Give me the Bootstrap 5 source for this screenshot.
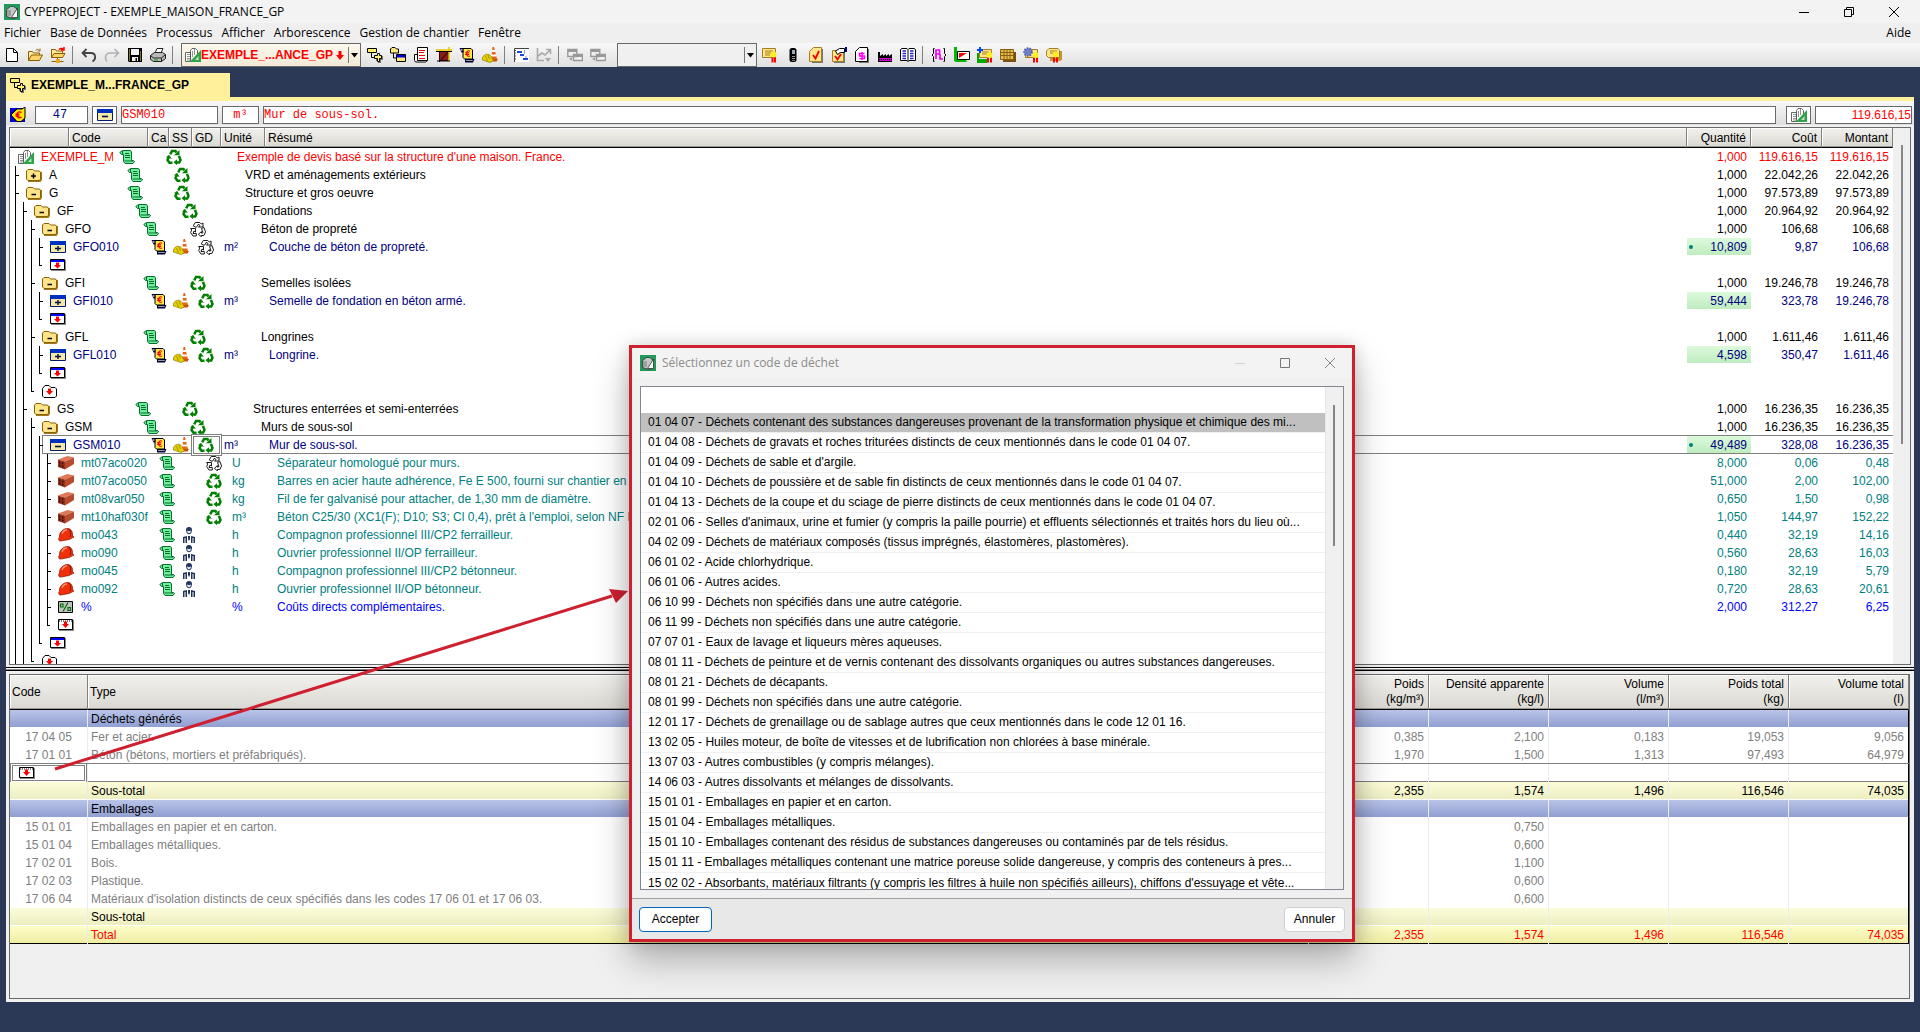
<!DOCTYPE html>
<html lang="fr">
<head>
<meta charset="utf-8">
<meta name="viewport" content="width=device-width, initial-scale=1">
<title>CYPEPROJECT - EXEMPLE_MAISON_FRANCE_GP</title>
<link href="https://cdn.jsdelivr.net/npm/bootstrap@5.3.0/dist/css/bootstrap.min.css" rel="stylesheet">
<style>
:root{--navy:#2b3956;--tab:#fff09c;--line:#696969;--ui:"Open Sans","Noto Sans",sans-serif;--grid:"Liberation Sans",Arial,sans-serif}
body{height:100vh;overflow:hidden;background:var(--navy);font:12px/18px var(--grid);color:#000}
svg{display:block;flex:none}
.ic{width:16px;height:16px}
button{font:inherit;color:inherit;background:none;border:0;padding:0}
.title-strip{height:23px;background:#f3f3f3;font-family:var(--ui)}
.win-btn{width:45px;height:18px}
.menu-strip{height:20px;background:#efefef;font-family:var(--ui);padding:0 9px 0 4px}
.menu-strip a{color:#000;text-decoration:none;margin-right:9px}
.menu-strip a:last-child{margin:0 0 0 auto}
.tool-strip{height:24px;background:linear-gradient(#f8f8f8,#e0e0e0)}
.tool{width:23px;height:24px}
.tool-sep{width:8px;height:18px;border-left:1px solid #808080;margin-left:3px;margin-right:-3px}
.doc-pick{width:180px;height:24px;margin:0 2px 0 4px;border:1px solid var(--line);background:linear-gradient(#fdf8ee,#f1e9d6);color:#f00;font-weight:700;padding-left:3px}
.pick-arrow{width:12px;height:16px;border-left:1px solid #777;flex:none;padding-left:2px}
.view-pick{width:140px;height:24px;margin:0 1px 0 8px;border:1px solid var(--line);background:#f0f0f0}
.view-pick select{appearance:none;border:0;background:none;min-width:0}
.tab-strip{height:30px;padding:6px 0 0 6px}
.doc-tab{width:224px;background:var(--tab);font-weight:700;padding-left:4px;gap:5px}
.work-pane{margin:0 6px 30px;border-top:4px solid var(--tab);background:#f0f0f0;min-height:0}
.edit-strip{background:linear-gradient(#f8f8f8,#dedede);padding:5px 2px 1px 4px;margin-bottom:2px;gap:4px}
.edit-strip input,.mini-btn{height:18px;border:1px solid var(--line);border-radius:0;background:#fff;padding:0;font:12px/16px "Liberation Mono",monospace;color:#f00}
.mini-btn{width:25px}
.edit-strip .f-pos{width:53px;margin-left:5px;color:#000080;padding-right:3px}
.edit-strip .f-code{width:97px}
.edit-strip .f-unit{width:37px}
.edit-strip .b-total{margin-left:6px}
.edit-strip .f-total{width:97px;font-family:var(--grid)}
.sheet{border:1px solid var(--line);margin:0 3px}
.sheet table{table-layout:fixed;width:100%;border-collapse:separate;border-spacing:0}
.sheet th{font-weight:400;background:linear-gradient(#f2f1ee,#dad8d1);border-right:1px solid #808080;border-bottom:1px solid #000;box-shadow:inset 0 -1px #999,inset 1px 1px #fff;padding:0 4px 0 2px;white-space:nowrap;overflow:hidden}
.sheet td{height:18px;line-height:18px;padding:0;white-space:nowrap;overflow:hidden}
.sheet .num{text-align:right;padding-right:4px}
.tree-table th{height:20px;line-height:18px;padding-top:1px;padding-left:3px}
.tree-row{height:18px;padding-left:5px}
.guide{width:8px;height:18px;border-left:1px solid #000;position:relative}
.guide.tick::after{content:"";position:absolute;left:0;top:9px;width:3px;height:1px;background:#000}
.guide.end{border-left:0}
.guide.end::before{content:"";position:absolute;left:0;top:0;width:1px;height:10px;background:#000}
.node-ic{margin-right:7px;width:16px}
.code-txt{width:72px;overflow:hidden;margin-right:6px}
.slot-ca{width:22px}.slot-ss{width:25px}.slot-gd{width:26px}.slot-un{width:45px}
.k-root{color:#f00}.k-chap{color:#000}.k-item{color:#000080}.k-res{color:#008080}.k-pct{color:#00f}
.measured{background:linear-gradient(#dcfadc,#bfecbf) no-repeat;background-size:100% 17px;position:relative}
.measured.dotted::before{content:"";position:absolute;left:2px;top:7px;width:4px;height:4px;border-radius:2px;background:#008080}
.tree-rest{height:18px;padding-left:3px}
.sheet .picked td{overflow:visible}
.picked .tree-rest,.picked .num{box-shadow:0 -1px #808080,inset 0 -1px #808080}
.picked .tree-rest{border-left:1px solid #808080;margin-left:-5px;padding-left:7px}
.cell-focus{width:31px;height:22px;margin:-2px 0 -2px -7px;padding-left:4px;border:3px double #808080;background:#fff}
.rail{width:17px;background:#f0f0f0;padding:17px 0 0 8px}
.rail i{display:block;width:2px;height:299px;background:#868686}
.splitter{height:4px;margin:2px 0 3px;border-top:1px solid #000;border-bottom:1px solid #000;box-shadow:inset 0 -1px #808080;background:#fff}
.waste-sheet{margin-right:4px;margin-bottom:3px;padding-bottom:54px}
.waste-table th{height:35px;line-height:15px}
.waste-table td{background:#fff;border-right:1px solid #ececf0;color:#808080;padding-left:3px}
.waste-table td:last-child{border-right-color:#000}
.waste-table .code-cell{text-align:center;padding:0}
.waste-table .sect td{background:#fff linear-gradient(#bac4e8,#909fd2) no-repeat;background-size:100% 17px;color:#000}
.waste-table .sub td{background:#fff linear-gradient(#fcfcda,#eeeec2) no-repeat;background-size:100% 17px;color:#000}
.waste-table .tot td{background:#000 linear-gradient(#fdfdc8,#f0eea4) no-repeat;background-size:100% 17px;color:#f00}
.waste-table .entry td{overflow:visible;box-shadow:0 -1px #808080,inset 0 -1px #808080}
.entry-box{height:20px;margin:-1px 0;border:3px double #808080;background:#fff;padding-left:6px}
.picker{position:absolute;left:629px;top:345px;width:726px;height:597px;border:3px solid #cf2030;background:#f0f0f0;box-shadow:0 18px 34px rgba(0,0,0,.28),0 0 16px rgba(0,0,0,.14)}
.picker-head{height:30px;background:#f3f3f3;font-family:var(--ui);color:#8c8c8c;padding-left:8px}
.picker-head .ic{margin-right:6px}
.picker-list{margin:8px;border:1px solid #828790;background:#fff;min-height:0}
.picker-list input{height:26px;border:0;outline:0;padding:0 7px}
.picker-list .list-group-item{height:20px;line-height:18px;padding:0 0 1px 7px;border:0;border-bottom:1px solid #f0f0f0;white-space:nowrap;overflow:hidden;color:#000;flex:none}
.picker-list .list-group-item.active{background:#c0c0c0;color:#000;margin:0}
.picker-rail{width:18px;border-left:1px solid #e6e6e6;background:#f0f0f0;padding:18px 0 0 7px}
.picker-rail i{display:block;width:2px;height:141px;background:#868686}
.picker-foot{height:41px;background:#e8e8e8;border-top:1px solid #a0a0a0;padding:0 7px}
.dlg-btn{height:25px;border:1px solid #d0d0d0;border-radius:4px;background:#fdfdfd;width:61px}
.dlg-btn.main{border-color:#0067c0;width:73px}
.pointer-line{position:absolute;left:0;top:0;width:640px;height:800px;pointer-events:none}
</style>
</head>
<body class="d-flex flex-column">

<svg width="0" height="0" class="position-absolute" aria-hidden="true">
<symbol id="i-app" viewBox="0 0 16 16"><path fill="#1f9a5a" d="M0 0h16v16H0z"/><path fill="#c4c8c4" stroke="#333" stroke-width=".8" d="M2.500 5.500 6.500 2.500h3l3 2v9l-4 1-6-2z"/><path stroke="#666" stroke-width=".8" d="M4 6v6M6 6v6"/><path fill="#fff" stroke="#333" stroke-width=".8" d="M13.500 4v9.500h-6z"/></symbol>
<symbol id="i-bldg" viewBox="0 0 16 16"><path fill="#fff" stroke="#555" stroke-width=".9" d="M.5 5.500h5v9h-5zM5.500 12V3.500L7 1.500h3.500l2 2V7"/><path stroke="#777" stroke-width=".8" d="M2 7.500h3M2 9.500h3M2 11.500h3M2 13h3M7.500 4v6M9.500 2v6"/><path fill="#2fa24a" d="M16 3v12H4.500z"/><path fill="#b8e8c0" d="M13.500 9v4h-3.500z"/></symbol>
<symbol id="i-new" viewBox="0 0 16 16"><path fill="#fff" stroke="#000" d="M2.500 1.500h7l4 4v9h-11z"/><path fill="none" stroke="#000" d="M9.500 1.500v4h4"/></symbol>
<symbol id="i-open" viewBox="0 0 16 16"><path fill="#ffe9a0" stroke="#8a6000" d="M1.500 13.500v-9h4l1 1.500h6v2"/><path fill="#ffd468" stroke="#8a6000" d="M1.500 13.500 4.500 8h11l-3 5.500z"/><path fill="none" stroke="#a07020" d="M8.500 3.500c2-2 4-1 4.500.5m0-2.500v2.500h-2.500"/></symbol>
<symbol id="i-opennet" viewBox="0 0 16 16"><path fill="#ffe9a0" stroke="#8a6000" d="M1.500 10.500v-8h4l1 1.500h6v2"/><path fill="#ffd468" stroke="#8a6000" d="M1.500 10.500 4 6.500h11l-2.500 4zM7.500 11v2m-6 1.500h12"/><path fill="#e8a820" d="M6 12h4v4H6z"/><path fill="none" stroke="#f00" stroke-width="1.500" d="M9 2.500c2-2 4-1 5 .5m0-3v3h-3"/></symbol>
<symbol id="i-undo" viewBox="0 0 16 16"><path fill="none" stroke="#444" stroke-width="1.800" d="M5.500 2 1.500 6l4 4M2 6h8c5 0 5.500 6 1.500 8.500"/></symbol>
<symbol id="i-redo" viewBox="0 0 16 16"><path fill="none" stroke="#b0b0b0" stroke-width="1.600" d="m10.500 2 4 4-4 4M14 6H6C1 6 .5 12 3 14.500"/></symbol>
<symbol id="i-save" viewBox="0 0 16 16"><path d="M1 1h14v14H2l-1-1z"/><path fill="#f0f0f0" d="M4 2h8v6H4zM5 10h6v4H5z"/><path fill="#808000" d="M2 2h1v12H2zM13 4h1v10h-1z"/><path d="M8.500 11H10v3H8.500z"/></symbol>
<symbol id="i-print" viewBox="0 0 16 16"><path fill="#fff" stroke="#222" d="M5 6 7 1.500h6L11 6"/><path fill="#b8b8b8" stroke="#222" d="m.5 8.500 4-3h8l3 2v4l-4 3h-8l-3-2z"/><path stroke="#222" fill="none" d="m.5 8.500 3 2.500h8l4-3.500M11.500 11v3.500"/><path stroke="#0a0" d="M4 13h4"/></symbol>
<symbol id="i-branch" viewBox="0 0 16 16"><path fill="#777" d="M9 9h7v4h-2v3h-3v-2H9z"/><path fill="#fff06a" stroke="#000" d="M.5 1.500h9v4h-9z"/><path fill="none" stroke="#000" d="M4.500 5.500v5h4"/><path fill="#fff36b" stroke="#000" d="M10.500 6.500h2v2h2v3h-2v3h-2v-3h-3v-3h3z"/></symbol>
<symbol id="i-folders" viewBox="0 0 16 16"><path fill="#ffe97a" stroke="#000" d="M.5 2 2 .5h3L6.500 2h2v4h-8z"/><path fill="none" stroke="#000" d="M3.500 6v5h3"/><path fill="#ffe97a" stroke="#000" d="M6.500 7.500h9v7h-9z"/><path fill="#00d" d="M7 8h8v2.500H7z"/></symbol>
<symbol id="i-docred" viewBox="0 0 16 16"><path fill="#fff" stroke="#000" d="M4.500.5h10v13h-10z"/><path fill="#fff" stroke="#000" d="M4.500 7.500h-3v6l1 1.500h10l2-1.500h-10z"/><path stroke="#e00" d="M6 3.500h6M6 5.500h5M6 8.500h6M6 11.500h6"/></symbol>
<symbol id="i-cross" viewBox="0 0 16 16"><path fill="#8b1a1a" stroke="#400" d="M3.500 4.500h9v9h-9z"/><path stroke="#e8c800" stroke-width="1.500" d="M0 3h16M13 0v14"/><path stroke="#000" d="M0 4.500h16M3 15 12 5M1 14h13"/></symbol>
<symbol id="i-euro" viewBox="0 0 16 16"><path fill="#ffe84a" stroke="#000" d="M4 1.500h8l1.500 1.500v9H5.500L4 10.500z"/><path fill="#003" d="M.5 1h4v4.500h-2zM6 12h9.500L14 15.500H6z"/><path fill="#99a" d="M7 13h7l-.5 1H7zM1.500 2h2v2h-2z"/><path fill="none" stroke="#e00" stroke-width="1.100" d="M11 4.300C9 3 7.400 4.600 7.400 6.500S9 10 11 8.900M6.200 5.800h4M6.200 7.400h4"/></symbol>
<symbol id="i-cone" viewBox="0 0 16 16"><path fill="#e8641a" d="M10.500 0h1.500l3 12H9z"/><path fill="#fff" d="M9.900 3h2.900l.5 2H9.500zM9 7.500h5l.5 2H9z"/><path fill="#d05000" d="M8 12h8l-1.500 2.500H8z"/><path fill="#e6d000" stroke="#8a7a00" stroke-width=".7" d="M.5 13C-.5 7 8 4.500 10 11.500l1.500 2-3.500 2z"/><path stroke="#8a7a00" stroke-width=".7" d="M3.500 9l2 5M6 8l1.500 4"/></symbol>
<symbol id="i-gantt" viewBox="0 0 16 16"><path fill="#fff" d="M1 1h15v14H1z"/><path stroke="#444" fill="none" d="M1.500 15V1.500H16M1 3.500h2M1 6h2M1 9h2M1 12h2"/><path fill="#1a49d8" d="M4 4h5v2H4zM7 7h4v2H7zM10 11h5v2h-5z"/><path stroke="#99a" d="M11.500 3v4M13 9v2"/></symbol>
<symbol id="i-chart" viewBox="0 0 16 16"><path fill="none" stroke="#aaa" stroke-width="1.600" d="M1.500 1v12.500H8M2 9l4-3 3 2 5-5M10 2.500h4.500V7"/><path fill="#aaa" d="M9 11h6l-3 4z"/></symbol>
<symbol id="i-dup" viewBox="0 0 16 16"><path fill="#f0f0f0" stroke="#999" stroke-width="1.400" d="M.8 2.500h9v7h-9zM6.500 7.500h9v6h-9z"/><path fill="#999" d="M1 2h9v3H1zM6 7h10v3H6zM2 12l3-1.500v3z"/></symbol>
<symbol id="i-cert" viewBox="0 0 16 16"><path fill="#ffe68a" stroke="#a87c20" d="M.5 1.500h13v9H.5z"/><path stroke="#a87c20" d="M3 4h8M3 6h6M3 8h5"/><circle cx="11.500" cy="7.500" r="3" fill="#ffee20"/><path fill="#f00" d="M9.500 10.500h2V16l-1-1-1 1zM12 10.500h2V16l-1-1-1 1z"/></symbol>
<symbol id="i-certplus" viewBox="0 0 16 16"><path fill="#0a0" d="M0 6h2v6h8v4H0z"/><path fill="#ffe68a" stroke="#a87c20" d="M2.500 2.500h12v8h-12z"/><path stroke="#a87c20" d="M5 5h7M5 7h5"/><circle cx="12.500" cy="8" r="3" fill="#ffee20"/><path fill="#f00" d="M10 11h2v5l-1-1-1 1zM13 11h2v5l-1-1-1 1z"/><path stroke="#04f" stroke-width="2" d="M0 3h6M3 0v6"/></symbol>
<symbol id="i-certgear" viewBox="0 0 16 16"><path fill="#ffe68a" stroke="#a87c20" d="M2.500 2.500h12v8h-12z"/><circle cx="12.500" cy="8" r="3" fill="#ffee20"/><path fill="#f00" d="M10 11h2v5l-1-1-1 1zM13 11h2v5l-1-1-1 1z"/><circle cx="5" cy="5" r="3.800" fill="#7080c8" stroke="#5060b0" stroke-width="2" stroke-dasharray="1.500 1.200"/></symbol>
<symbol id="i-certs" viewBox="0 0 16 16"><path fill="#c89830" d="M4 4h12v9l-2 1H4z"/><path fill="#ffe68a" stroke="#a87c20" d="M.5 4 3 1.500h9l1.500 2v7h-11l-2-2z"/><path stroke="#a87c20" d="M4 4h7M4 6h5"/><circle cx="9.500" cy="7.500" r="3" fill="#ffee20"/><path fill="#f00" d="M7 10.500h2V16l-1-1-1 1zM10 10.500h2V16l-1-1-1 1z"/></symbol>
<symbol id="i-phone" viewBox="0 0 16 16"><rect x="4.500" y="1" width="7" height="14" rx="2.500"/><path fill="#9ab" d="M7 3h3v4H7z"/><path fill="#999" d="M7 9h3v1H7zM7 11h3v1H7zM7 13h3v.8H7z"/></symbol>
<symbol id="i-note" viewBox="0 0 16 16"><path fill="#777" d="M4 2h11v14H4z"/><path fill="#ffe68a" stroke="#a87c20" d="M5.500.5h8v14h-12v-10z"/><path fill="none" stroke="#e00" stroke-width="1.800" d="m5 8 2.500 3.500L11 4"/></symbol>
<symbol id="i-notehand" viewBox="0 0 16 16"><path fill="#777" d="M3 5h11v11H3z"/><path fill="#ffe68a" stroke="#a87c20" d="M1.500 3.500h11v11h-11z"/><path fill="none" stroke="#e00" stroke-width="1.800" d="m4 9 2.500 3.500L10 7"/><path fill="#fff" stroke="#000" d="m4.500 4 4-2.500h5v4h-4l-3 2z"/><path fill="#008" d="M14 0h2v5h-2z"/></symbol>
<symbol id="i-dollar" viewBox="0 0 16 16"><path fill="#777" d="M5 2h10v14H5z"/><path fill="#fff" stroke="#000" d="M5.500.5h8v14h-12v-10z"/><path fill="none" stroke="#f0f" stroke-width="1.500" d="M10.500 6.500h-5V9h5v2.500h-5M8 5v8"/></symbol>
<symbol id="i-factory" viewBox="0 0 16 16"><path d="M1 5h2v4l3-2v2l3-2v2l3-2v2l3-2v8H1z"/><path fill="#c0c" d="M2 11h13v3H2z"/><path stroke="#000" stroke-dasharray="1 1" d="M2 12.500h13"/></symbol>
<symbol id="i-book" viewBox="0 0 16 16"><path fill="#fff" stroke="#000" d="M.5 2.500 2 1.500h5l1 1 1-1h5l1.500 1v11H9l-1 1-1-1H.5zM8 2.500v12"/><path stroke="#22c" stroke-width="1.300" d="M2.500 4H6M2.500 6.500H6M2.500 9H6M2.500 11.500H6M10 4h3.500M10 6.500h3.500M10 9h3.500M10 11.500h3.500"/></symbol>
<symbol id="i-curly" viewBox="0 0 16 16"><path fill="none" stroke="#000" d="M3.500 1.500h-1v5l-1.500 1.500 1.500 1.500v5h1M12.500 1.500h1v5l1.500 1.500-1.500 1.500v5h-1"/><path fill="none" stroke="#e0e" stroke-width="1.700" d="M5 12V3h3.500v4H5M9 7v5h3"/></symbol>
<symbol id="i-dev" viewBox="0 0 16 16"><path fill="#0b0" d="M0 0h3v11h8l2 4H2l-2-1z"/><path fill="#fff" stroke="#000" d="M3.500 4.500h12v8h-12z"/><path fill="#f00" d="M5 6h8l-8 5z"/></symbol>
<symbol id="i-gridy" viewBox="0 0 16 16"><path fill="#7a5010" d="M3 5h13v10H3z"/><path fill="#e8c050" stroke="#8a6010" d="M.5 2.500h13v10H.5z"/><path stroke="#8a6010" d="M4 3v9M7 3v9M10 3v9M1 5.500h12M1 8.500h12"/></symbol>
<symbol id="i-scroll" viewBox="0 0 16 16"><path fill="#6cf09a" stroke="#0a6a30" d="M3.500 1.500h8l1 1.500v8.500h2l1 1-1.500 2h-8l-1.500-2V5.500h-2L.8 3.500z"/><path stroke="#0a6a30" d="M6 4.500h4M6 6.500h5M6 8.500h5M5.500 12h9M3.500 2v3"/></symbol>
<symbol id="i-rec" viewBox="0 0 16 16"><path fill="none" stroke="#008000" stroke-width="2.500" d="M4.200 5.300 6 2h3.500l1 1.500M2.500 8.500l-1 2.500 2 2.800h3M13 6.800l1.500 4.200-1.300 2.500H10.500"/><path fill="#008000" d="M8 6.200h5.500V1zM0 8.200l3-2.400 2.800 4.200zM11 10.300V16.200L7.500 13.300z"/></symbol>
<symbol id="i-reco" viewBox="0 0 16 16"><path fill="#fff" stroke="#000" stroke-width=".9" d="M3.200 4.800 5.300 1.500H9.800L11.300 3l1.700-1V6H8.500L10 4.800 8.600 3 6.200 6.500zM.6 7.500H5.500v3.500L4 10l-1 2.500H6.300v2.500H3L.6 11.500 1.800 9zM11.500 7.500l2.500-1 1.500 4.500-1.600 3.500h-2.500v1.300l-3-2.500 3-2.700v1.500l1.600-.4z"/></symbol>
<symbol id="i-fplus" viewBox="0 0 16 16"><path fill="#a07818" d="M1 5h15v8l-1.500 2H2z"/><path fill="#ffe48a" stroke="#8a6000" d="M.5 4 2 2.500h5L8.500 4h5l1 1.500v7L13 13.500H2L.5 12z"/><path stroke="#000" stroke-width="1.500" d="M5 9h5M7.500 6.500v5"/></symbol>
<symbol id="i-fminus" viewBox="0 0 16 16"><path fill="#a07818" d="M1 5h15v8l-1.500 2H2z"/><path fill="#ffe48a" stroke="#8a6000" d="M.5 4 2 2.500h5L8.500 4h5l1 1.500v7L13 13.500H2L.5 12z"/><path stroke="#000" stroke-width="1.500" d="M5.500 9.500h4.500"/></symbol>
<symbol id="i-bplus" viewBox="0 0 16 16"><path fill="#f6e9a8" stroke="#001a70" d="M.5 2.500h15v11H.5z"/><path fill="#0030c0" d="M0 2h16v4H0z"/><path stroke="#001040" stroke-width="1.400" d="M5 9.500h6M8 7v5"/></symbol>
<symbol id="i-bminus" viewBox="0 0 16 16"><path fill="#f6e9a8" stroke="#001a70" d="M.5 2.500h15v11H.5z"/><path fill="#0030c0" d="M0 2h16v4H0z"/><path stroke="#001040" stroke-width="1.600" d="M5 9.500h6"/></symbol>
<symbol id="i-bins" viewBox="0 0 16 16"><path fill="#888" d="M1 3h15v11H1z"/><path fill="#fff" stroke="#000" d="M.5 2.500h14v10H.5z"/><path fill="#00f" d="M1 3h13v2H1z"/><path fill="#f00" d="M6 5.500h3V8h2L7.500 11.500 4 8h2z"/></symbol>
<symbol id="i-kins" viewBox="0 0 16 16"><path fill="#888" d="M1 3h15v11H1z"/><path fill="#fff" stroke="#000" d="M.5 2.500h14v10H.5z"/><path stroke="#000" d="M1 4h13" stroke-dasharray="1 1"/><path fill="#f00" d="M6 4.500h3V7h2l-3.500 4L4 7h2z"/></symbol>
<symbol id="i-fins" viewBox="0 0 16 16"><path fill="#fff" stroke="#000" d="M.5 5.500 3 2.500h4l2 2h4l1.500 1.500v7L13 14.500H2L.5 13z"/><path fill="#f00" d="M6 5.500h3V8h2L7.500 12 4 8h2z"/></symbol>
<symbol id="i-brick" viewBox="0 0 16 16"><path fill="#e07858" d="m0 4.500 9.500-3.500L16 2.500 7 6.500z"/><path fill="#b84a30" d="m7 6.500 9-4V9l-9 5.500z"/><path fill="#983420" d="m0 4.500 7 2v8L0 12z"/><path fill="#401008" d="M1 6.500h1.500v2H1zM3.800 7.500h1.700v2H3.800zM1 9.500h1.500v2H1zM3.800 10.500h1.700v2H3.800z"/></symbol>
<symbol id="i-helmet" viewBox="0 0 16 16"><path fill="#f0300a" stroke="#8a1000" stroke-width=".7" d="M1.500 10C1 5 6 1 10 1.500c3.500.5 5 4 4.500 7.500L16 10l-5 2.500-8 1.500c-2.500.3-3-2-1.500-4z"/><path stroke="#ff9070" fill="none" stroke-width="1.300" d="M4 7c1-3 3-4 5-4"/><path stroke="#8a1000" fill="none" d="M11 2c2 2 2 5 1 8"/></symbol>
<symbol id="i-worker" viewBox="0 0 16 16"><path fill="#20335c" d="M5 3a3 3 0 0 1 6 0v1H5zM2 10l4-1v7H2zM10 9l4 1v6h-4z"/><circle cx="8" cy="4.500" r="2.300" fill="#dde4f0" stroke="#20335c"/><path fill="#20335c" d="M7 9h2v3l-1 2-1-2zM7 2h2v2H7z"/><path stroke="#fff" d="M4 11v5M12 11v5"/></symbol>
<symbol id="i-pct" viewBox="0 0 16 16"><path fill="#c0c0c0" stroke="#000" d="M.5 2.500h14v11H.5z"/><path fill="none" stroke="#007000" stroke-width="1.200" d="m10 3.500-5 9M2.500 5h2.500v3H2.500zM10 8.500h2.500v3H10z"/></symbol>
<symbol id="i-tag" viewBox="0 0 16 16"><path fill="#00c" d="M0 1h15v14H0z"/><path fill="#ffe800" stroke="#000" d="M1 8 7 2h5l3-2v11l-4 3.500H7z"/><path fill="none" stroke="#e00" stroke-width="1.400" d="M11.500 5.500c-3-1.500-4.500 0-4.500 2.500s2 3.500 4.500 2.200M5.500 7.300h4M5.500 9h4"/></symbol>
</svg>

<header class="title-strip d-flex align-items-center flex-shrink-0 ps-1">
  <svg class="ic"><use href="#i-app"/></svg>
  <span class="ms-1 me-auto">CYPEPROJECT - EXEMPLE_MAISON_FRANCE_GP</span>
  <button class="win-btn" aria-label="Réduire"><svg class="m-auto" width="12" height="12"><path stroke="#000" d="M1 6.500h10"/></svg></button>
  <button class="win-btn" aria-label="Restaurer"><svg class="m-auto" width="12" height="12"><path fill="none" stroke="#000" d="M1.500 3.500h7v7h-7zM3.500 3V1.500h7v7H9"/></svg></button>
  <button class="win-btn me-1" aria-label="Fermer"><svg class="m-auto" width="12" height="12"><path stroke="#000" d="m1 1 10 10M11 1 1 11"/></svg></button>
</header>

<nav class="menu-strip d-flex align-items-center flex-shrink-0">
  <a href="#">Fichier</a><a href="#">Base de Données</a><a href="#">Processus</a><a href="#">Afficher</a><a href="#">Arborescence</a><a href="#">Gestion de chantier</a><a href="#">Fenêtre</a><a href="#">Aide</a>
</nav>

<div class="tool-strip d-flex align-items-center flex-shrink-0" role="toolbar">
  <div class="d-flex" data-tools="new:Nouveau,open:Ouvrir,opennet:Gestion des fichiers"></div>
  <span class="tool-sep"></span>
  <div class="d-flex" data-tools="undo:Défaire,redo:Refaire,save:Enregistrer,print:Imprimer"></div>
  <span class="tool-sep"></span>
  <button class="doc-pick d-flex align-items-center">
    <svg class="ic"><use href="#i-bldg"/></svg><span class="me-auto">EXEMPLE_...ANCE_GP</span>
    <svg class="me-1" width="8" height="9"><path fill="#f00" d="M2.500 0h3v4H8L4 9 0 4h2.500z"/></svg>
    <span class="pick-arrow d-flex align-items-center"><svg width="7" height="5"><path d="M0 0h7L3.500 4.500z"/></svg></span>
  </button>
  <div class="d-flex" data-tools="branch:Arborescence,folders:Chapitres,docred:Documents,cross:Métrés,euro:Budget,cone:Sécurité"></div>
  <span class="tool-sep"></span>
  <div class="d-flex" data-tools="gantt:Diagramme,chart:Courbe"></div>
  <span class="tool-sep"></span>
  <div class="d-flex" data-tools="dup:Copier,dup:Coller"></div>
  <div class="view-pick d-flex align-items-center">
    <select class="flex-grow-1" aria-label="Vue"><option></option></select>
    <span class="pick-arrow d-flex align-items-center"><svg width="7" height="5"><path d="M0 0h7L3.500 4.500z"/></svg></span>
  </div>
  <div class="d-flex" data-tools="cert:Certification,phone:Appel,note:Vérifier,notehand:Réviser,dollar:Prix,factory:Fournisseurs,book:Cahier"></div>
  <span class="tool-sep"></span>
  <div class="d-flex" data-tools="curly:Variables,dev:Devis,certplus:Ajouter,gridy:Tableau,certgear:Options,certs:Certifications"></div>
</div>

<div class="tab-strip d-flex flex-shrink-0">
  <a href="#" class="doc-tab d-flex align-items-center text-decoration-none text-black"><svg class="ic"><use href="#i-branch"/></svg>EXEMPLE_M...FRANCE_GP</a>
</div>

<main class="work-pane d-flex flex-column flex-grow-1">
  <div class="edit-strip d-flex align-items-center flex-shrink-0">
    <svg class="ic"><use href="#i-tag"/></svg>
    <input class="f-pos text-center" aria-label="Position" value="47" size="1">
    <button class="mini-btn d-flex align-items-center justify-content-center" aria-label="Type"><svg class="ic"><use href="#i-bminus"/></svg></button>
    <input class="f-code" aria-label="Code" value="GSM010" size="1">
    <input class="f-unit text-center" aria-label="Unité" value="m³" size="1">
    <input class="flex-grow-1" aria-label="Résumé" value="Mur de sous-sol." size="1">
    <button class="mini-btn b-total d-flex align-items-center justify-content-center" aria-label="Total"><svg class="ic"><use href="#i-bldg"/></svg></button>
    <input class="f-total text-end" aria-label="Montant" value="119.616,15" size="1">
  </div>

  <section class="sheet d-flex flex-grow-1 overflow-hidden">
    <div class="flex-grow-1 overflow-hidden bg-white">
      <table class="tree-table">
        <colgroup><col width="59"><col width="79"><col width="21"><col width="23"><col width="29"><col width="44"><col><col width="64"><col width="71"><col width="71"></colgroup>
        <thead><tr><th></th><th>Code</th><th class="pe-0">Ca</th><th class="pe-0">SS</th><th>GD</th><th>Unité</th><th>Résumé</th><th class="num">Quantité</th><th class="num">Coût</th><th class="num">Montant</th></tr></thead>
        <tbody id="tree-body"></tbody>
      </table>
    </div>
    <div class="rail flex-shrink-0"><i></i></div>
  </section>
  <div class="splitter flex-shrink-0"></div>
  <section class="sheet waste-sheet flex-shrink-0">
    <table class="waste-table">
      <colgroup><col width="78"><col><col width="120"><col width="120"><col width="120"><col width="120"><col width="120"></colgroup>
      <thead><tr><th>Code</th><th>Type</th><th class="num">Poids<br>(kg/m³)</th><th class="num">Densité apparente<br>(kg/l)</th><th class="num">Volume<br>(l/m³)</th><th class="num">Poids total<br>(kg)</th><th class="num">Volume total<br>(l)</th></tr></thead>
      <tbody id="waste-body"></tbody>
    </table>
  </section>
</main>

<svg class="pointer-line" aria-hidden="true"><path stroke="#cf2030" stroke-width="3" d="M55 769 612 596"/><path fill="#cf2030" d="m628 591-19-2 7 14z"/></svg>

<section class="picker d-flex flex-column" role="dialog" aria-labelledby="picker-title">
  <div class="picker-head d-flex align-items-center flex-shrink-0">
    <svg class="ic"><use href="#i-app"/></svg><span id="picker-title" class="me-auto">Sélectionnez un code de déchet</span>
    <button class="win-btn" aria-label="Réduire"><svg class="m-auto" width="12" height="12"><path stroke="#d0d0d0" d="M1 6.500h10"/></svg></button>
    <button class="win-btn" aria-label="Agrandir"><svg class="m-auto" width="12" height="12"><path fill="none" stroke="#777" d="M1.500 1.500h9v9h-9z"/></svg></button>
    <button class="win-btn" aria-label="Fermer"><svg class="m-auto" width="12" height="12"><path stroke="#888" d="m1 1 10 10M11 1 1 11"/></svg></button>
  </div>
  <div class="picker-list d-flex flex-grow-1 overflow-hidden">
    <div class="flex-grow-1 d-flex flex-column overflow-hidden">
      <input aria-label="Rechercher un code" class="flex-shrink-0">
      <div class="list-group list-group-flush" id="code-list"></div>
    </div>
    <div class="picker-rail flex-shrink-0"><i></i></div>
  </div>
  <div class="picker-foot d-flex align-items-center justify-content-between flex-shrink-0">
    <button class="dlg-btn main">Accepter</button><button class="dlg-btn">Annuler</button>
  </div>
</section>

<script src="https://cdn.jsdelivr.net/npm/bootstrap@5.3.0/dist/js/bootstrap.bundle.min.js"></script>
<script>
const icon = n => n ? `<svg class="ic"><use href="#i-${n}"/></svg>` : '';
document.querySelectorAll('[data-tools]').forEach(g => {
  g.innerHTML = g.dataset.tools.split(',').map(t => {
    const [n, label] = t.split(':');
    return `<button class="tool d-flex align-items-center justify-content-center" aria-label="${label}">${icon(n)}</button>`;
  }).join('');
});

/* level | last child | kind | icon | code | Ca | SS | GD | unit | summary | quantity | cost | amount */
const tree = `0||root|bldg|EXEMPLE_M|scroll||rec||Exemple de devis basé sur la structure d'une maison. France.|1,000|119.616,15|119.616,15
1||chap|fplus|A|scroll||rec||VRD et aménagements extérieurs|1,000|22.042,26|22.042,26
1||chap|fminus|G|scroll||rec||Structure et gros oeuvre|1,000|97.573,89|97.573,89
2||chap|fminus|GF|scroll||rec||Fondations|1,000|20.964,92|20.964,92
3||chap|fminus|GFO|scroll||reco||Béton de propreté|1,000|106,68|106,68
4||item|bplus|GFO010|euro|cone|reco|m²|Couche de béton de propreté.|*10,809|9,87|106,68
4|x|item|bins
3||chap|fminus|GFI|scroll||rec||Semelles isolées|1,000|19.246,78|19.246,78
4||item|bplus|GFI010|euro|cone|rec|m³|Semelle de fondation en béton armé.|59,444|323,78|19.246,78
4|x|item|bins
3||chap|fminus|GFL|scroll||rec||Longrines|1,000|1.611,46|1.611,46
4||item|bplus|GFL010|euro|cone|rec|m³|Longrine.|4,598|350,47|1.611,46
4|x|item|bins
3|x|chap|fins
2||chap|fminus|GS|scroll||rec||Structures enterrées et semi-enterrées|1,000|16.236,35|16.236,35
3||chap|fminus|GSM|scroll||rec||Murs de sous-sol|1,000|16.236,35|16.236,35
4||item|bminus|GSM010|euro|cone|rec|m³|Mur de sous-sol.|*49,489|328,08|16.236,35
5||res|brick|mt07aco020|scroll||reco|U|Séparateur homologué pour murs.|8,000|0,06|0,48
5||res|brick|mt07aco050|scroll||rec|kg|Barres en acier haute adhérence, Fe E 500, fourni sur chantier en barres|51,000|2,00|102,00
5||res|brick|mt08var050|scroll||rec|kg|Fil de fer galvanisé pour attacher, de 1,30 mm de diamètre.|0,650|1,50|0,98
5||res|brick|mt10haf030f|scroll||rec|m³|Béton C25/30 (XC1(F); D10; S3; Cl 0,4), prêt à l'emploi, selon NF EN 206|1,050|144,97|152,22
5||res|helmet|mo043|scroll|worker||h|Compagnon professionnel III/CP2 ferrailleur.|0,440|32,19|14,16
5||res|helmet|mo090|scroll|worker||h|Ouvrier professionnel II/OP ferrailleur.|0,560|28,63|16,03
5||res|helmet|mo045|scroll|worker||h|Compagnon professionnel III/CP2 bétonneur.|0,180|32,19|5,79
5||res|helmet|mo092|scroll|worker||h|Ouvrier professionnel II/OP bétonneur.|0,720|28,63|20,61
5||pct|pct|%||||%|Coûts directs complémentaires.|2,000|312,27|6,25
5|x|pct|kins
4|x|item|bins
3|x|chap|fins`.split('\n').map(l => l.split('|'));

document.getElementById('tree-body').innerHTML = tree.map(r => {
  const [lv, last, kind, ic, code = '', ca, ss, gd, unit = '', txt = '', q = '', c = '', m = ''] = r;
  let guides = '';
  for (let k = 1; k <= +lv; k++) guides += `<span class="guide${k == lv ? ' tick' + (last ? ' end' : '') : ''}"></span>`;
  const picked = code === 'GSM010';
  const qCls = kind === 'item' && q ? ` measured${q[0] === '*' ? ' dotted' : ''}` : '';
  return `<tr class="k-${kind}${picked ? ' picked' : ''}"><td colspan="7"><div class="tree-row d-flex align-items-center">${guides}
    <div class="tree-rest d-flex align-items-center flex-grow-1"><span class="node-ic">${icon(ic)}</span><span class="code-txt">${code}</span>
    <span class="slot-ca">${icon(ca)}</span><span class="slot-ss">${icon(ss)}</span><span class="slot-gd">${picked ? `<span class="cell-focus d-flex align-items-center">${icon(gd)}</span>` : icon(gd)}</span>
    <span class="slot-un">${unit}</span><span>${txt}</span></div></div></td>
    <td class="num${qCls}">${q.replace('*', '')}</td><td class="num">${c}</td><td class="num">${m}</td></tr>`;
}).join('');

/* row class | code | type | weight | density | volume | total weight | total volume */
const waste = `sect||Déchets générés
|17 04 05|Fer et acier.|0,385|2,100|0,183|19,053|9,056
|17 01 01|Béton (bétons, mortiers et préfabriqués).|1,970|1,500|1,313|97,493|64,979
entry|*
sub||Sous-total|2,355|1,574|1,496|116,546|74,035
sect||Emballages
|15 01 01|Emballages en papier et en carton.||0,750
|15 01 04|Emballages métalliques.||0,600
|17 02 01|Bois.||1,100
|17 02 03|Plastique.||0,600
|17 06 04|Matériaux d'isolation distincts de ceux spécifiés dans les codes 17 06 01 et 17 06 03.||0,600
sub||Sous-total
tot||Total|2,355|1,574|1,496|116,546|74,035`.split('\n').map(l => l.split('|'));
document.getElementById('waste-body').innerHTML = waste.map(([cls, code, type = '', ...n]) =>
  `<tr class="${cls}"><td class="code-cell">${code === '*' ? `<div class="entry-box d-flex align-items-center">${icon('kins')}</div>` : code}</td><td>${type}</td>${[0, 1, 2, 3, 4].map(k => `<td class="num">${n[k] || ''}</td>`).join('')}</tr>`).join('');

const codes = `01 04 07 - Déchets contenant des substances dangereuses provenant de la transformation physique et chimique des mi...
01 04 08 - Déchets de gravats et roches triturées distincts de ceux mentionnés dans le code 01 04 07.
01 04 09 - Déchets de sable et d'argile.
01 04 10 - Déchets de poussière et de sable fin distincts de ceux mentionnés dans le code 01 04 07.
01 04 13 - Déchets de la coupe et du sciage de pierre distincts de ceux mentionnés dans le code 01 04 07.
02 01 06 - Selles d'animaux, urine et fumier (y compris la paille pourrie) et effluents sélectionnés et traités hors du lieu où...
04 02 09 - Déchets de matériaux composés (tissus imprégnés, élastomères, plastomères).
06 01 02 - Acide chlorhydrique.
06 01 06 - Autres acides.
06 10 99 - Déchets non spécifiés dans une autre catégorie.
06 11 99 - Déchets non spécifiés dans une autre catégorie.
07 07 01 - Eaux de lavage et liqueurs mères aqueuses.
08 01 11 - Déchets de peinture et de vernis contenant des dissolvants organiques ou autres substances dangereuses.
08 01 21 - Déchets de décapants.
08 01 99 - Déchets non spécifiés dans une autre catégorie.
12 01 17 - Déchets de grenaillage ou de sablage autres que ceux mentionnés dans le code 12 01 16.
13 02 05 - Huiles moteur, de boîte de vitesses et de lubrification non chlorées à base minérale.
13 07 03 - Autres combustibles (y compris mélanges).
14 06 03 - Autres dissolvants et mélanges de dissolvants.
15 01 01 - Emballages en papier et en carton.
15 01 04 - Emballages métalliques.
15 01 10 - Emballages contenant des résidus de substances dangereuses ou contaminés par de tels résidus.
15 01 11 - Emballages métalliques contenant une matrice poreuse solide dangereuse, y compris des conteneurs à pres...
15 02 02 - Absorbants, matériaux filtrants (y compris les filtres à huile non spécifiés ailleurs), chiffons d'essuyage et vête...`.split('\n');
document.getElementById('code-list').innerHTML = codes.map((c, i) => `<button class="list-group-item list-group-item-action${i ? '' : ' active'}">${c}</button>`).join('');
</script>
</body>
</html>
